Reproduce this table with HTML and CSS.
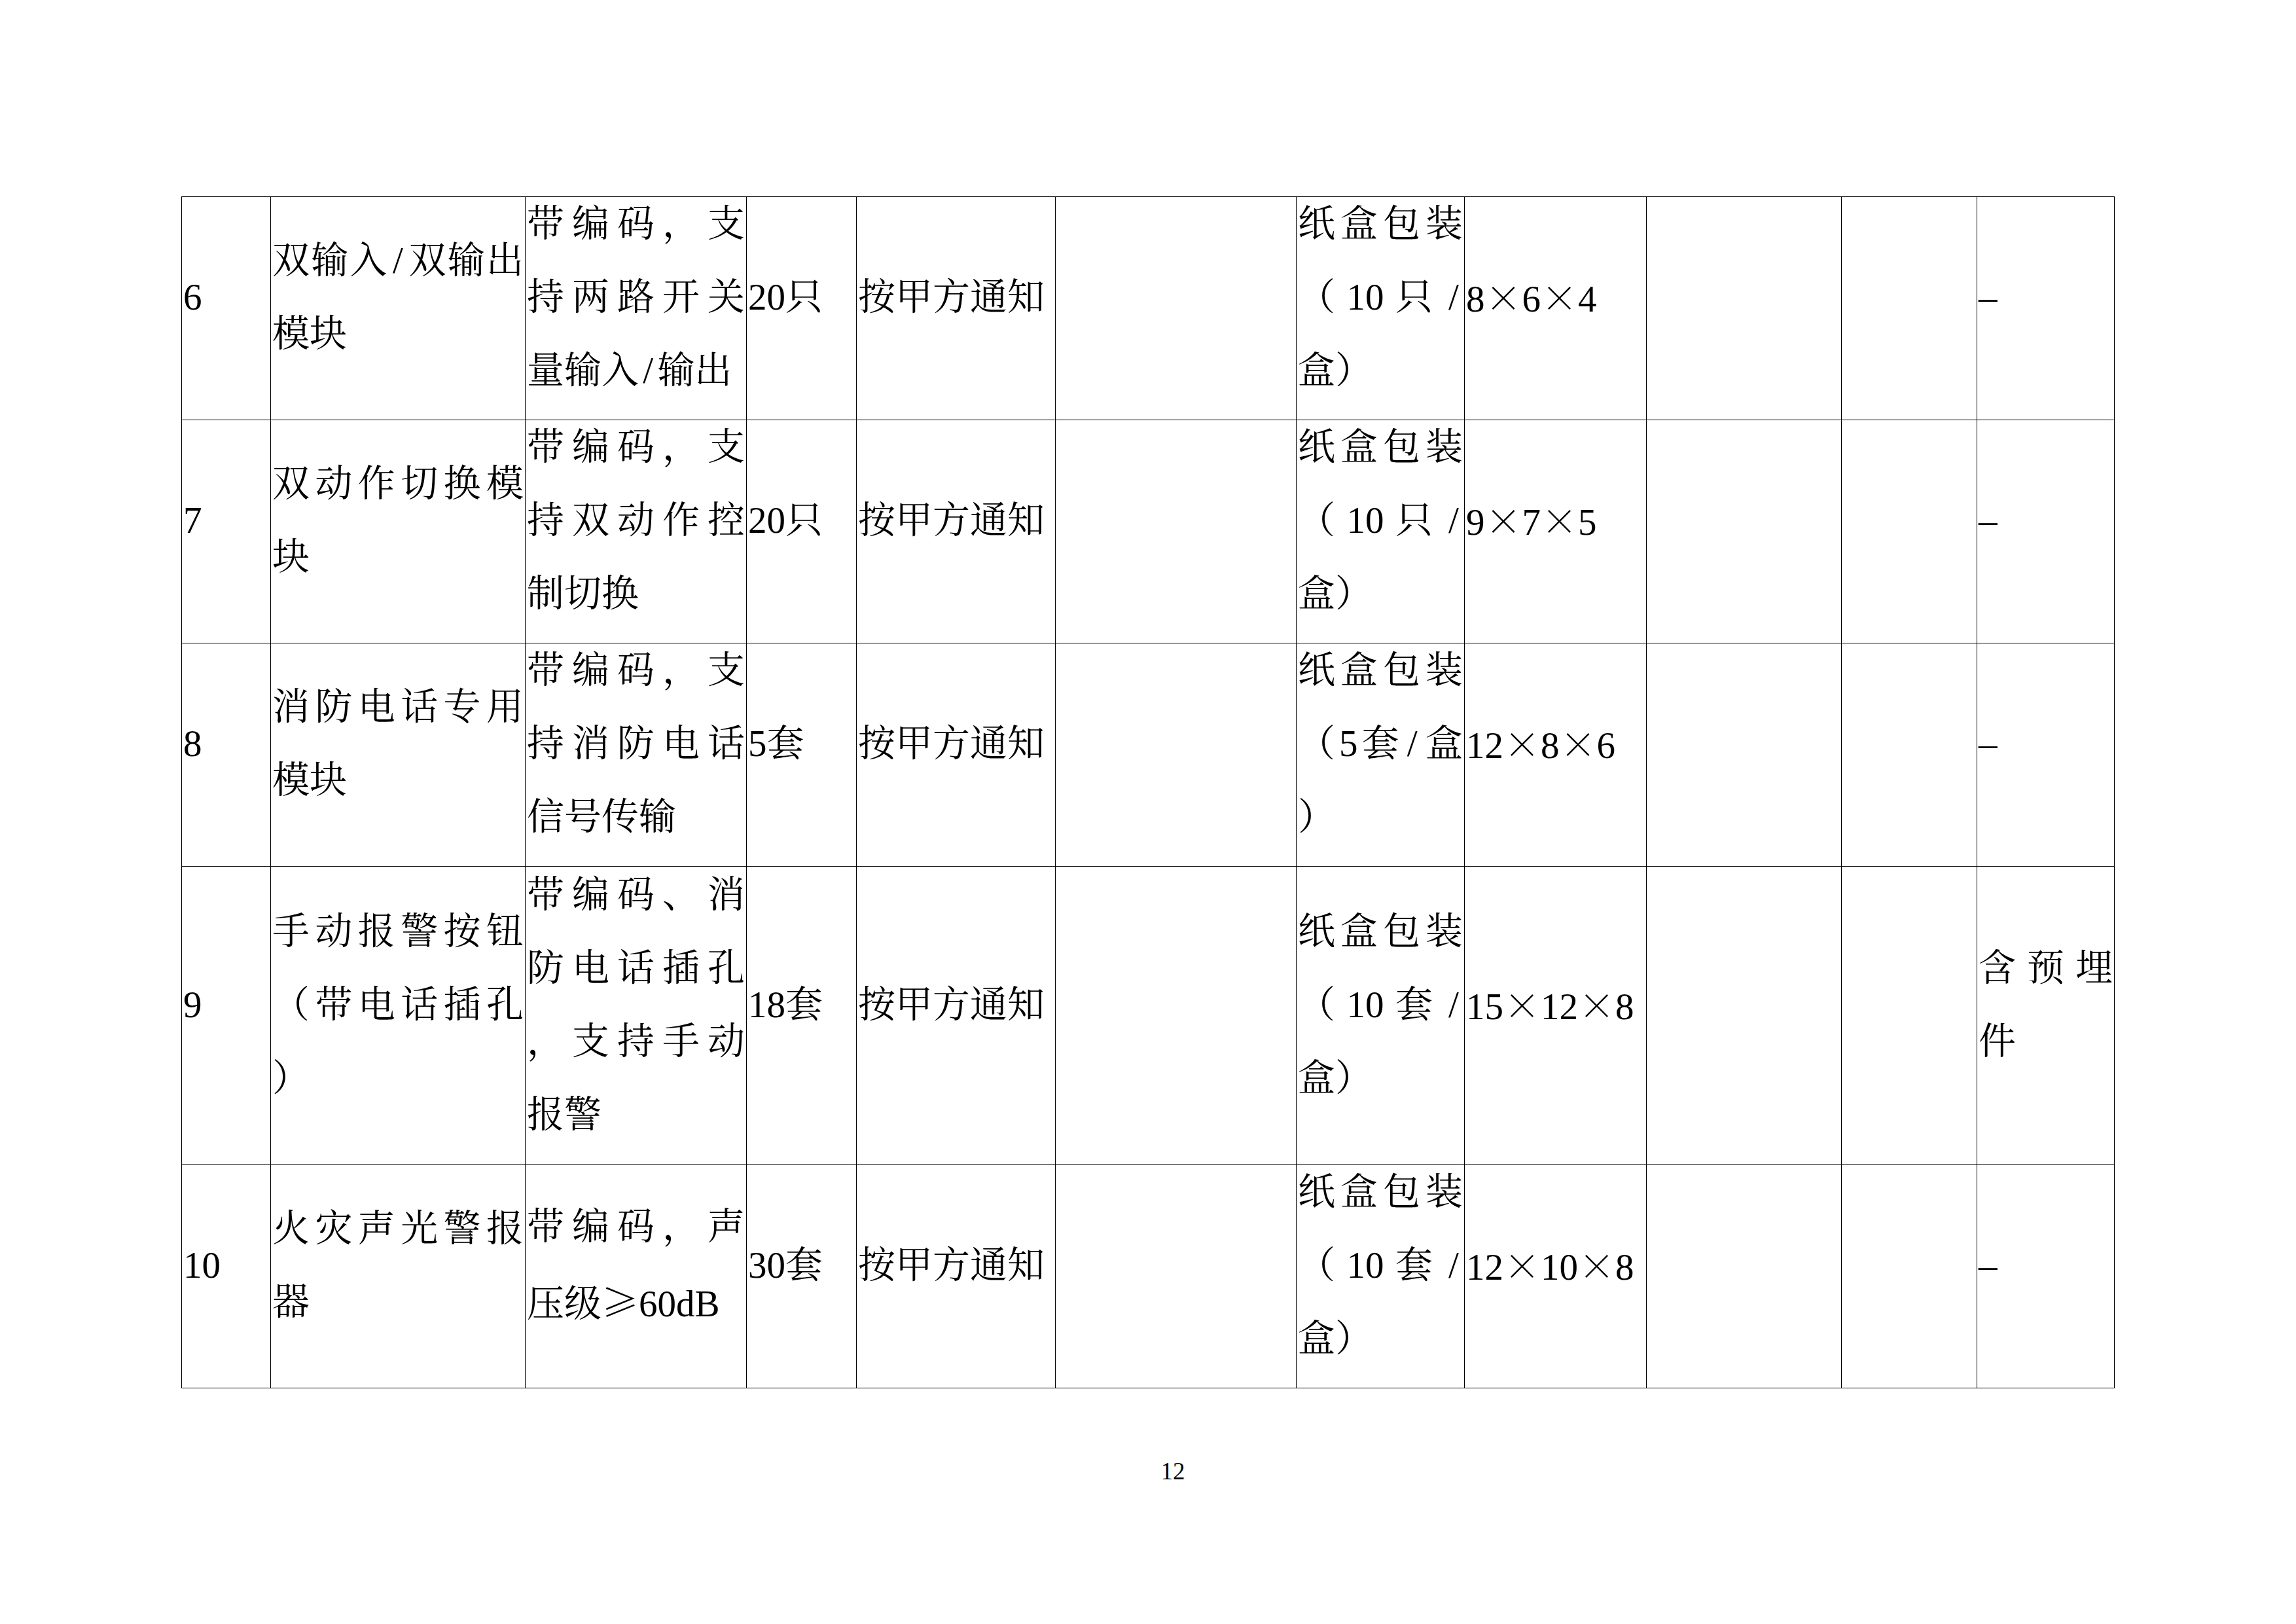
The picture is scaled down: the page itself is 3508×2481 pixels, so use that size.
FILE: index.html
```html
<!DOCTYPE html>
<html lang="zh-CN">
<head>
<meta charset="utf-8">
<title>设备清单</title>
<link rel="stylesheet" href="styles.css">
</head>
<body>
<table class="sheet">
  <colgroup>
    <col class="c-no"><col class="c-name"><col class="c-spec"><col class="c-qty"><col class="c-time">
    <col class="c-blank1"><col class="c-pack"><col class="c-size"><col class="c-blank2"><col class="c-blank3"><col class="c-note">
  </colgroup>
  <tbody>
    <tr class="row">
      <td><div class="t">6</div></td>
      <td><div class="t"><span class="ln j">双输入<span class="sl">/</span>双输出</span><span class="ln">模块</span></div></td>
      <td><div class="t"><span class="ln j">带编码，支</span><span class="ln j">持两路开关</span><span class="ln">量输入<span class="sl">/</span>输出</span></div></td>
      <td><div class="t">20只</div></td>
      <td><div class="t">按甲方通知</div></td>
      <td></td>
      <td><div class="t"><span class="ln j">纸盒包装</span><span class="ln j">（10只<span class="sl">/</span></span><span class="ln">盒）</span></div></td>
      <td><div class="t">8<span class="fw">×</span>6<span class="fw">×</span>4</div></td>
      <td></td>
      <td></td>
      <td><div class="t">–</div></td>
    </tr>
    <tr class="row">
      <td><div class="t">7</div></td>
      <td><div class="t">双动作切换模块</div></td>
      <td><div class="t">带编码，支持双动作控制切换</div></td>
      <td><div class="t">20只</div></td>
      <td><div class="t">按甲方通知</div></td>
      <td></td>
      <td><div class="t"><span class="ln j">纸盒包装</span><span class="ln j">（10只<span class="sl">/</span></span><span class="ln">盒）</span></div></td>
      <td><div class="t">9<span class="fw">×</span>7<span class="fw">×</span>5</div></td>
      <td></td>
      <td></td>
      <td><div class="t">–</div></td>
    </tr>
    <tr class="row">
      <td><div class="t">8</div></td>
      <td><div class="t">消防电话专用模块</div></td>
      <td><div class="t">带编码，支持消防电话信号传输</div></td>
      <td><div class="t">5套</div></td>
      <td><div class="t">按甲方通知</div></td>
      <td></td>
      <td><div class="t"><span class="ln j">纸盒包装</span><span class="ln j">（5套<span class="sl">/</span>盒</span><span class="ln">）</span></div></td>
      <td><div class="t">12<span class="fw">×</span>8<span class="fw">×</span>6</div></td>
      <td></td>
      <td></td>
      <td><div class="t">–</div></td>
    </tr>
    <tr class="row tall">
      <td><div class="t">9</div></td>
      <td><div class="t">手动报警按钮（带电话插孔）</div></td>
      <td><div class="t">带编码、消防电话插孔，支持手动报警</div></td>
      <td><div class="t">18套</div></td>
      <td><div class="t">按甲方通知</div></td>
      <td></td>
      <td><div class="t"><span class="ln j">纸盒包装</span><span class="ln j">（10套<span class="sl">/</span></span><span class="ln">盒）</span></div></td>
      <td><div class="t">15<span class="fw">×</span>12<span class="fw">×</span>8</div></td>
      <td></td>
      <td></td>
      <td><div class="t">含预埋件</div></td>
    </tr>
    <tr class="row">
      <td><div class="t">10</div></td>
      <td><div class="t">火灾声光警报器</div></td>
      <td><div class="t"><span class="ln j">带编码，声</span><span class="ln">压级<span class="fw">≥</span>60dB</span></div></td>
      <td><div class="t">30套</div></td>
      <td><div class="t">按甲方通知</div></td>
      <td></td>
      <td><div class="t"><span class="ln j">纸盒包装</span><span class="ln j">（10套<span class="sl">/</span></span><span class="ln">盒）</span></div></td>
      <td><div class="t">12<span class="fw">×</span>10<span class="fw">×</span>8</div></td>
      <td></td>
      <td></td>
      <td><div class="t">–</div></td>
    </tr>
  </tbody>
</table>
<div class="folio">12</div>
</body>
</html>
```

FILE: styles.css
```css
html, body {
  margin: 0;
  background: #ffffff;
}

body {
  padding: 300px 0 0 277px;
  color: #000000;
  font-family: "Liberation Serif", "Noto Serif CJK SC", "Noto Sans CJK SC", serif;
}

.sheet {
  border-collapse: collapse;
  table-layout: fixed;
  width: 2954px;
  font-size: 57px;
  line-height: 112px;
}

.c-no { width: 136px; }
.c-name { width: 389px; }
.c-spec { width: 338px; }
.c-qty { width: 168px; }
.c-time { width: 304px; }
.c-blank1 { width: 368px; }
.c-pack { width: 257px; }
.c-size { width: 278px; }
.c-blank2 { width: 298px; }
.c-blank3 { width: 207px; }
.c-note { width: 210px; }

.sheet td {
  border: 1px solid #000000;
  padding: 2px 2px;
  vertical-align: middle;
  text-align: justify;
  line-break: anywhere;
  text-spacing-trim: space-all;
  text-autospace: no-autospace;
}

.row { height: 341px; }
.row.tall { height: 456px; }

.t {
  margin: -17px 0 17px;
}

/* one visual line of a cell whose breaks follow the source document */
.ln {
  display: block;
  white-space: nowrap;
}

.ln.j {
  text-align-last: justify;
}

/* half-width slash, as in the Song face of the source */
.sl {
  padding: 0 0.11em;
}

/* full-width symbols (× and ≥) */
.fw {
  display: inline-block;
  width: 1em;
  text-align: center;
  font-family: "Noto Serif CJK SC", "Noto Sans CJK SC", sans-serif;
}

.folio {
  width: 2954px;
  box-sizing: border-box;
  margin-top: 107px;
  padding-left: 76px;
  text-align: center;
  font-size: 37px;
  line-height: 40px;
}
```
